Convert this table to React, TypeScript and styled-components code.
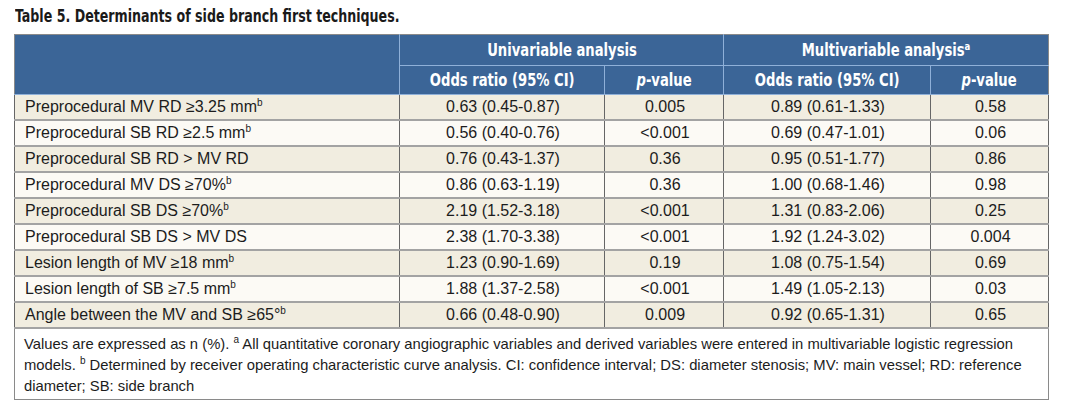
import React from "react";
import styled, { createGlobalStyle } from "styled-components";

const Global = createGlobalStyle`
  html, body { margin: 0; padding: 0; background: #ffffff; }
  body { font-family: "Liberation Sans", Arial, sans-serif; }
`;

const Page = styled.div`
  padding: 5px 17px 0 14px;
  width: 1034px;
`;

const Title = styled.h1`
  margin: 0 0 7px 1px;
  font-family: "DejaVu Sans Condensed", "Liberation Sans", sans-serif;
  font-weight: bold;
  font-size: 18px;
  line-height: 22px;
  color: #1a1a1a;
  white-space: nowrap;
  transform: scaleX(0.78);
  transform-origin: left center;
`;

const Table = styled.table`
  width: 1034px;
  border-collapse: collapse;
  table-layout: fixed;
  border: 1px solid #8a8a8a;
`;

const HeadCell = styled.th<{ $h: number }>`
  background: #3b6597;
  color: #ffffff;
  font-family: "DejaVu Sans Condensed", "Liberation Sans", sans-serif;
  font-weight: bold;
  font-size: 17px;
  height: ${(p) => p.$h}px;
  padding: 0;
  text-align: center;
  border: 1px solid #8fb0d8;
  border-top: none;
  &:first-child { border-left: none; }
  &:last-child { border-right: none; }
  sup { font-size: 11px; vertical-align: 6px; line-height: 0; }
`;

const Narrow = styled.span`
  display: inline-block;
  white-space: nowrap;
  transform: scaleX(0.86);
  transform-origin: center;
  i { font-style: italic; }
`;

const Row = styled.tr<{ $odd: boolean }>`
  background: ${(p) => (p.$odd ? "#f1ede0" : "#fcfaf5")};
`;

const Cell = styled.td<{ $align?: string }>`
  height: 24px;
  padding: 0 8px 0 10px;
  font-size: 16px;
  color: #1c1c1c;
  text-align: ${(p) => p.$align || "center"};
  border-left: 1px solid #666;
  border-right: 1px solid #666;
  border-bottom: 2px solid #a3a3a3;
  white-space: nowrap;
  sup { font-size: 10px; vertical-align: 6px; line-height: 0; }
`;

const Note = styled.td`
  padding: 5px 8px 2px 9px;
  font-size: 14.8px;
  line-height: 21px;
  color: #1c1c1c;
  background: #ffffff;
  white-space: nowrap;
  sup { font-size: 10px; vertical-align: 6px; line-height: 0; }
`;

type R = [React.ReactNode, string, string, string, string];
const b = <sup>b</sup>;
const rows: R[] = [
  [<>Preprocedural MV RD ≥3.25 mm{b}</>, "0.63 (0.45-0.87)", "0.005", "0.89 (0.61-1.33)", "0.58"],
  [<>Preprocedural SB RD ≥2.5 mm{b}</>, "0.56 (0.40-0.76)", "<0.001", "0.69 (0.47-1.01)", "0.06"],
  [<>Preprocedural SB RD &gt; MV RD</>, "0.76 (0.43-1.37)", "0.36", "0.95 (0.51-1.77)", "0.86"],
  [<>Preprocedural MV DS ≥70%{b}</>, "0.86 (0.63-1.19)", "0.36", "1.00 (0.68-1.46)", "0.98"],
  [<>Preprocedural SB DS ≥70%{b}</>, "2.19 (1.52-3.18)", "<0.001", "1.31 (0.83-2.06)", "0.25"],
  [<>Preprocedural SB DS &gt; MV DS</>, "2.38 (1.70-3.38)", "<0.001", "1.92 (1.24-3.02)", "0.004"],
  [<>Lesion length of MV ≥18 mm{b}</>, "1.23 (0.90-1.69)", "0.19", "1.08 (0.75-1.54)", "0.69"],
  [<>Lesion length of SB ≥7.5 mm{b}</>, "1.88 (1.37-2.58)", "<0.001", "1.49 (1.05-2.13)", "0.03"],
  [<>Angle between the MV and SB ≥65°{b}</>, "0.66 (0.48-0.90)", "0.009", "0.92 (0.65-1.31)", "0.65"],
];

export default function App() {
  return (
    <Page>
      <Global />
      <Title>Table 5. Determinants of side branch first techniques.</Title>
      <Table>
        <colgroup>
          <col style={{ width: 385 }} />
          <col style={{ width: 205 }} />
          <col style={{ width: 119 }} />
          <col style={{ width: 207 }} />
          <col style={{ width: 118 }} />
        </colgroup>
        <thead>
          <tr>
            <HeadCell $h={30} rowSpan={2} />
            <HeadCell $h={30} colSpan={2}>
              <Narrow>Univariable analysis</Narrow>
            </HeadCell>
            <HeadCell $h={30} colSpan={2}>
              <Narrow>
                Multivariable analysis<sup>a</sup>
              </Narrow>
            </HeadCell>
          </tr>
          <tr>
            <HeadCell $h={28}>
              <Narrow>Odds ratio (95% CI)</Narrow>
            </HeadCell>
            <HeadCell $h={28}>
              <Narrow>
                <i>p</i>-value
              </Narrow>
            </HeadCell>
            <HeadCell $h={28}>
              <Narrow>Odds ratio (95% CI)</Narrow>
            </HeadCell>
            <HeadCell $h={28}>
              <Narrow>
                <i>p</i>-value
              </Narrow>
            </HeadCell>
          </tr>
        </thead>
        <tbody>
          {rows.map((r, i) => (
            <Row key={i} $odd={i % 2 === 0}>
              <Cell $align="left">{r[0]}</Cell>
              <Cell>{r[1]}</Cell>
              <Cell>{r[2]}</Cell>
              <Cell>{r[3]}</Cell>
              <Cell>{r[4]}</Cell>
            </Row>
          ))}
          <tr>
            <Note colSpan={5}>
              Values are expressed as n (%). <sup>a</sup> All quantitative coronary angiographic variables and derived
              variables were entered in multivariable logistic regression
              <br />
              models. <sup>b</sup> Determined by receiver operating characteristic curve analysis. CI: confidence
              interval; DS: diameter stenosis; MV: main vessel; RD: reference
              <br />
              diameter; SB: side branch
            </Note>
          </tr>
        </tbody>
      </Table>
    </Page>
  );
}
